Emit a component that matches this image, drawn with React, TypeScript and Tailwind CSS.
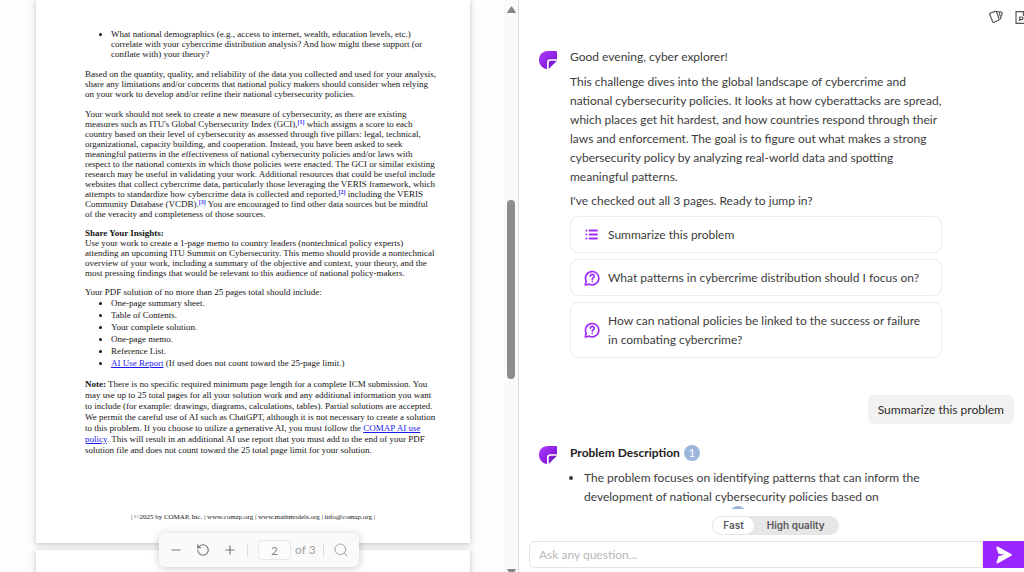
import React from "react";
import { Plus, Minus, RotateCcw, Search } from "lucide-react";

const docFont = "font-['Liberation_Serif','Times_New_Roman',serif]";
const uiFont = "font-['Lato','Open_Sans',sans-serif]";

function Lines({ rows }: { rows: React.ReactNode[] }) {
  return (
    <>
      {rows.map((row, i) => (
        <React.Fragment key={i}>
          {i > 0 && <br />}
          {row}
        </React.Fragment>
      ))}
    </>
  );
}

function Ref({ n }: { n: number }) {
  return (
    <sup>
      <a href="#notes" className="text-[6px] leading-none font-bold text-[#2a2aee]">
        [{n}]
      </a>
    </sup>
  );
}

function DocLink({ children }: { children: React.ReactNode }) {
  return (
    <a href="#ai" className="text-[#1a1af0] underline">
      {children}
    </a>
  );
}

function Logo() {
  return (
    <svg viewBox="0 0 54 54" className="mt-px size-[18px] shrink-0" aria-hidden="true">
      <defs>
        <linearGradient id="logo" x1="0" y1="0" x2="1" y2="1">
          <stop offset="0" stopColor="#b03cff" />
          <stop offset="0.6" stopColor="#8a1fe0" />
          <stop offset="1" stopColor="#6a12b4" />
        </linearGradient>
      </defs>
      <path
        d="M26 0H51Q54 0 54 3V25H33Q24 25 24 34V54C10 53 0 41 0 27C0 11 11 0 26 0Z"
        fill="url(#logo)"
      />
      <path d="M35 29H54L29 54V35Q29 29 35 29Z" fill="#7f1cd2" />
    </svg>
  );
}

function ListIcon() {
  return (
    <svg viewBox="0 0 16 16" className="size-4 shrink-0" stroke="#a02bff" strokeWidth="1.8" strokeLinecap="round" aria-hidden="true">
      <path d="M2.300 3.500H2.400M2.300 7.500H2.400M2.300 11.500H2.400" />
      <path d="M5.500 3.500H13M5.500 7.500H13M5.500 11.500H13" />
    </svg>
  );
}

function QuestionIcon() {
  return (
    <svg
      viewBox="0 0 24 24"
      className="size-4 shrink-0"
      fill="none"
      stroke="#a02bff"
      strokeWidth="2.5"
      strokeLinecap="round"
      strokeLinejoin="round"
      aria-hidden="true"
    >
      <path d="M2 22.5 3.2 16.5A10 10 0 1 1 7.8 21.2Z" />
      <path d="M9.5 9.2A2.9 2.9 0 1 1 13.6 12C12.7 12.5 12.4 12.9 12.4 13.8" />
      <path d="M12.4 17.1V17.2" />
    </svg>
  );
}

function Suggestion({ icon, rows }: { icon: React.ReactNode; rows: string[] }) {
  return (
    <button className="flex w-full items-center gap-2 rounded-lg border border-[#ececec] bg-white px-[13px] py-2 text-left">
      {icon}
      <span>
        <Lines rows={rows} />
      </span>
    </button>
  );
}

function DocPage() {
  return (
    <article
      className={`flex w-[434px] flex-col bg-white px-[49px] pt-[29px] text-[9px] leading-[10px] whitespace-nowrap text-[#151515] shadow-[0_1px_6px_rgba(0,0,0,0.25)] ${docFont}`}
    >
      <ul className="mb-[10px] list-disc pl-[26px]">
        <li>
          <Lines
            rows={[
              "What national demographics (e.g., access to internet, wealth, education levels, etc.)",
              "correlate with your cybercrime distribution analysis? And how might these support (or",
              "conflate with) your theory?",
            ]}
          />
        </li>
      </ul>
      <p className="mb-[10px]">
        <Lines
          rows={[
            "Based on the quantity, quality, and reliability of the data you collected and used for your analysis,",
            "share any limitations and/or concerns that national policy makers should consider when relying",
            "on your work to develop and/or refine their national cybersecurity policies.",
          ]}
        />
      </p>
      <p className="mb-[9px]">
        <Lines
          rows={[
            "Your work should not seek to create a new measure of cybersecurity, as there are existing",
            <>
              measures such as ITU's Global Cybersecurity Index (GCI),
              <Ref n={1} /> which assigns a score to each
            </>,
            "country based on their level of cybersecurity as assessed through five pillars: legal, technical,",
            "organizational, capacity building, and cooperation. Instead, you have been asked to seek",
            "meaningful patterns in the effectiveness of national cybersecurity policies and/or laws with",
            "respect to the national contexts in which those policies were enacted. The GCI or similar existing",
            "research may be useful in validating your work. Additional resources that could be useful include",
            "websites that collect cybercrime data, particularly those leveraging the VERIS framework, which",
            <>
              attempts to standardize how cybercrime data is collected and reported,
              <Ref n={2} /> including the VERIS
            </>,
            <>
              Community Database (VCDB).
              <Ref n={3} /> You are encouraged to find other data sources but be mindful
            </>,
            "of the veracity and completeness of those sources.",
          ]}
        />
      </p>
      <h2 className="font-bold">Share Your Insights:</h2>
      <p className="mb-[9px]">
        <Lines
          rows={[
            "Use your work to create a 1-page memo to country leaders (nontechnical policy experts)",
            "attending an upcoming ITU Summit on Cybersecurity. This memo should provide a nontechnical",
            "overview of your work, including a summary of the objective and context, your theory, and the",
            "most pressing findings that would be relevant to this audience of national policy-makers.",
          ]}
        />
      </p>
      <p>Your PDF solution of no more than 25 pages total should include:</p>
      <ul className="mb-[10px] list-disc pl-[26px] leading-3">
        <li>One-page summary sheet.</li>
        <li>Table of Contents.</li>
        <li>Your complete solution.</li>
        <li>One-page memo.</li>
        <li>Reference List.</li>
        <li>
          <DocLink>AI Use Report</DocLink> (If used does not count toward the 25-page limit.)
        </li>
      </ul>
      <p className="leading-[11px]">
        <Lines
          rows={[
            <>
              <b>Note:</b> There is no specific required minimum page length for a complete ICM submission. You
            </>,
            "may use up to 25 total pages for all your solution work and any additional information you want",
            "to include (for example: drawings, diagrams, calculations, tables). Partial solutions are accepted.",
            "We permit the careful use of AI such as ChatGPT, although it is not necessary to create a solution",
            <>
              to this problem. If you choose to utilize a generative AI, you must follow the{" "}
              <DocLink>COMAP AI use</DocLink>
            </>,
            <>
              <DocLink>policy</DocLink>. This will result in an additional AI use report that you must add to the end of your PDF
            </>,
            "solution file and does not count toward the 25 total page limit for your solution.",
          ]}
        />
      </p>
      <footer className="pt-14 pb-[21px] text-center text-[7px]">
        | ©2025 by COMAP, Inc. | www.comap.org | www.mathmodels.org | info@comap.org |
      </footer>
    </article>
  );
}

function Toolbar() {
  return (
    <div
      className={`absolute bottom-[5px] left-1/2 flex h-[34px] w-[200px] -translate-x-1/2 items-center rounded-md bg-[#fafafa] px-[10px] text-xs text-[#a3a3a3] shadow-[0_1px_8px_rgba(0,0,0,0.22)] ${uiFont}`}
    >
      <button aria-label="Zoom out">
        <Minus size={14} strokeWidth={2} className="text-[#777]" />
      </button>
      <button aria-label="Rotate" className="ml-[13px]">
        <RotateCcw size={14} strokeWidth={2} className="text-[#777]" />
      </button>
      <button aria-label="Zoom in" className="ml-[13px]">
        <Plus size={14} strokeWidth={2} className="text-[#777]" />
      </button>
      <span className="ml-[10px] h-[14px] w-px bg-[#dedede]" />
      <input
        aria-label="Page"
        defaultValue="2"
        className="ml-[10px] h-5 w-[33px] rounded-sm border border-[#e8e8e8] bg-[#fcfcfc] text-center text-[#888]"
      />
      <span className="ml-1 whitespace-nowrap">of 3</span>
      <span className="ml-auto h-[14px] w-px bg-[#dedede]" />
      <button aria-label="Search" className="ml-[9px]">
        <Search size={16} strokeWidth={1.5} />
      </button>
    </div>
  );
}

function DocViewer() {
  return (
    <section className="relative flex min-w-0 overflow-hidden border-r border-[#dcdcdc] bg-[#fdfdfd]">
      <div className="flex min-w-0 flex-1 flex-col items-center gap-[7px] overflow-hidden pl-[2px]">
        <DocPage />
        <div className="h-40 w-[434px] shrink-0 bg-white shadow-[0_1px_6px_rgba(0,0,0,0.25)]" />
      </div>
      <div className="flex w-[14px] flex-col items-center justify-between overflow-hidden bg-[#fafafa] pt-[6px]">
        <svg viewBox="0 0 9 7" className="h-[7px] w-[9px] shrink-0" fill="#888" aria-hidden="true">
          <path d="M4 .5Q4.500 0 5 .5L8.700 6Q9 7 8 7H1Q0 7 .3 6Z" />
        </svg>
        <div className="mb-[3px] h-[179px] w-2 shrink-0 rounded-full bg-[#8c8c8c]" />
        <svg viewBox="0 0 9 3" className="h-[3px] w-[9px] shrink-0" fill="#888" aria-hidden="true">
          <path d="M0 0H9L7.500 3H1.500Z" />
        </svg>
      </div>
      <Toolbar />
    </section>
  );
}

function ChatPanel() {
  return (
    <section className={`flex min-w-0 flex-col overflow-hidden bg-white text-xs leading-[19px] text-[#3c3c3c] ${uiFont}`}>
      <header className="flex h-[34px] shrink-0 items-center justify-end gap-3 overflow-hidden">
        <button aria-label="Flashcards">
          <svg viewBox="0 0 42 42" className="size-[14px]" fill="none" stroke="#555" strokeWidth="3.500" strokeLinejoin="round" strokeLinecap="round">
            <path d="M4 9 19 4Q22 3 23 6L30 27Q31 30 28 31L16 37Q12 39 11 35L2 13Q1 10 4 9Z" />
            <path d="M26 4 31 6 33 18M34 5 40 8 34 27" />
          </svg>
        </button>
        <button aria-label="Export PDF" className="-mr-1">
          <svg viewBox="0 0 39 39" className="size-[13px]" fill="none" stroke="#555" strokeWidth="3.500" strokeLinejoin="round">
            <path d="M3 2H25L36 13V37H3Z" />
            <path d="M25 2V13H36M14 30V18H20Q24 18 24 22Q24 26 20 26H14" />
          </svg>
        </button>
      </header>

      <div className="flex min-h-0 flex-1 flex-col overflow-hidden pt-4 pr-[10px] pl-5">
        <div className="flex shrink-0 gap-[13px]">
          <Logo />
          <div className="-mt-[3px] w-[372px] whitespace-nowrap">
            <p className="mb-[6px]">Good evening, cyber explorer!</p>
            <p className="mb-[5px]">
              <Lines
                rows={[
                  "This challenge dives into the global landscape of cybercrime and",
                  "national cybersecurity policies. It looks at how cyberattacks are spread,",
                  "which places get hit hardest, and how countries respond through their",
                  "laws and enforcement. The goal is to figure out what makes a strong",
                  "cybersecurity policy by analyzing real-world data and spotting",
                  "meaningful patterns.",
                ]}
              />
            </p>
            <p className="mb-[6px]">I've checked out all 3 pages. Ready to jump in?</p>
            <div className="flex flex-col gap-[6px]">
              <Suggestion icon={<ListIcon />} rows={["Summarize this problem"]} />
              <Suggestion
                icon={<QuestionIcon />}
                rows={["What patterns in cybercrime distribution should I focus on?"]}
              />
              <Suggestion
                icon={<QuestionIcon />}
                rows={["How can national policies be linked to the success or failure", "in combating cybercrime?"]}
              />
            </div>
          </div>
        </div>

        <div className="mt-[37px] shrink-0 self-end rounded-md bg-[#f1f1f1] px-[10px] py-[5px] text-[#2c2c2c]">
          Summarize this problem
        </div>

        <div className="mt-[21px] flex shrink-0 gap-[13px]">
          <Logo />
          <div className="-mt-[2px] whitespace-nowrap">
            <h3 className="flex items-center gap-1 font-bold text-[#222]">
              Problem Description
              <span className="flex size-4 items-center justify-center rounded-full bg-[#9db7dc] text-[11px] font-normal text-white">
                1
              </span>
            </h3>
            <ul className="mt-[6px] list-disc pl-[14px]">
              <li>
                The problem focuses on identifying patterns that can inform the
                <br />
                development of national cybersecurity policies based on
              </li>
            </ul>
            <span className="ml-[160px] block size-4 rounded-full bg-[#9db7dc]" />
          </div>
        </div>
      </div>

      <div className="flex shrink-0 justify-center pt-[7px] pb-[6px] pl-2">
        <div className="flex rounded-full bg-[#e6e6e6] p-px font-['Inter',sans-serif] text-[10px] leading-[17px] font-semibold text-[#5a5a5a]">
          <button className="rounded-full bg-white px-[10px]">Fast</button>
          <button className="px-[13px]">High quality</button>
        </div>
      </div>

      <form className="mb-1 flex h-[27px] shrink-0 pl-[10px]" onSubmit={(e) => e.preventDefault()}>
        <input
          aria-label="Ask any question"
          placeholder="Ask any question..."
          className="min-w-0 flex-1 rounded-l-md border border-[#e4e4e4] px-[9px] text-xs placeholder:text-[#b9b9b9]"
        />
        <button aria-label="Send" className="flex w-[41px] items-center justify-center bg-[#9b26ff]">
          <svg viewBox="0 0 48 52" className="h-[18px] w-4" fill="#fff" aria-hidden="true">
            <path d="M2 2Q3 0 6 1L46 23Q49 25.500 46 28L6 51Q3 52 2 50Q1 48 2 46L8 29L26 25.500L8 22L1 5Q1 3 2 2Z" />
          </svg>
        </button>
      </form>
    </section>
  );
}

function App() {
  return (
    <main className="grid h-screen grid-cols-[519fr_505fr] overflow-hidden bg-white">
      <DocViewer />
      <ChatPanel />
    </main>
  );
}

export default App;
